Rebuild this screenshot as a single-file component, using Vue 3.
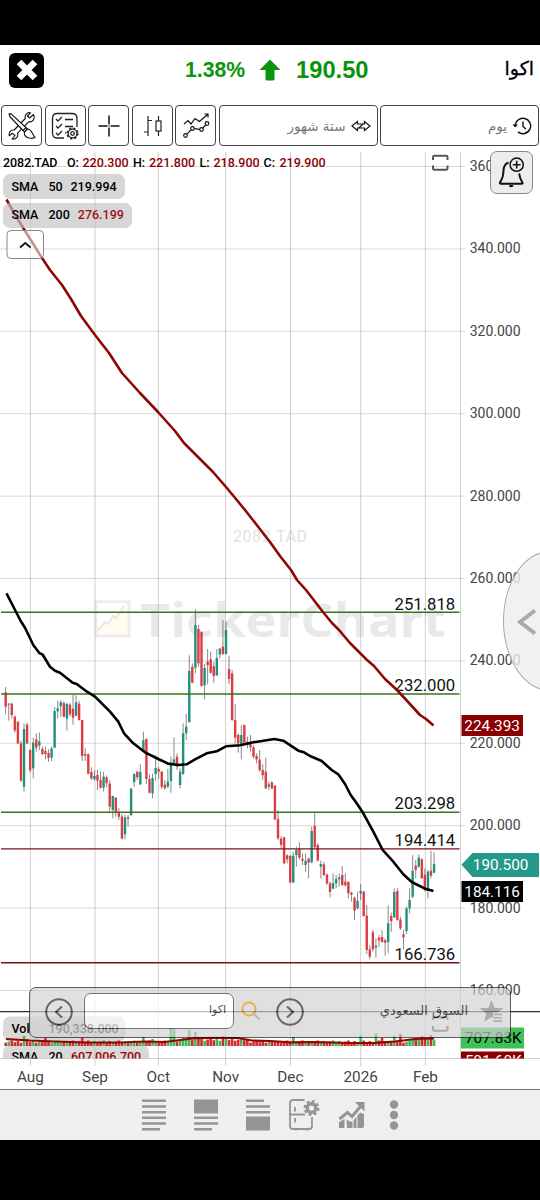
<template>
    <div class="screen">
        <header class="header">
            <button class="close-btn">
                <svg width="24" height="24" viewBox="0 0 24 24">
                    <path d="M4 4L20 20M20 4L4 20" stroke="#fff" stroke-width="6.6" />
                </svg>
            </button>
            <div class="quote">
                <span class="percent">1.38%</span>
                <svg class="arrow" width="22" height="22" viewBox="0 0 22 22">
                    <path d="M11 0.5L21.5 11H15.5V20Q15.5 21.5 14 21.5H8Q6.5 21.5 6.5 20V11H0.5Z" fill="#0b930b" />
                </svg>
                <span class="price">190.50</span>
            </div>
            <div class="symbol">اكوا</div>
        </header>

        <nav class="toolbar">
            <button class="tool">
                <svg width="28" height="28" viewBox="0 0 28 28" fill="#fff" stroke="#111" stroke-width="1.1" stroke-linejoin="round">
                    <path d="M25.5 2.5L21.5 6L19.5 4L22.5 0.8C19 0 16.5 3 17.3 6.5L6.2 18C3 17.5 0.5 20 1.3 23.8L4.5 21.3L7 23.5L4 27C8 27.8 10.5 24.5 9.6 21.2L20.6 9.8C24.5 10.5 27.5 7 25.5 2.5Z" />
                    <path d="M1 2Q2.5 1 4 2.7L19.5 17L16.5 20L2.2 5Z" />
                    <path d="M16.5 20L19.5 17C24 17 24 22.5 27 25.5C21.5 27.5 15.5 25.5 16.5 20Z" />
                    <path d="M15 18.5L18 15.5" />
                </svg>
            </button>
            <button class="tool">
                <svg width="28" height="28" viewBox="0 0 28 28" fill="none" stroke="#222" stroke-width="1.3">
                    <path d="M13 26H6Q1.5 26 1.5 21V6.5Q1.5 1.5 6 1.5H21Q26 1.5 26 6.5V15" />
                    <path d="M5 7l2 2 4-4M5 14l2 2 4-4M5 21l2 2 4-4M14 7.5H22M14 14.5H22M14 21H15" />
                    <circle cx="21.5" cy="21.5" r="4.4" />
                    <circle cx="21.5" cy="21.5" r="5.2" stroke-width="1.8" stroke-dasharray="2.1 2" />
                    <circle cx="21.5" cy="21.5" r="1.8" />
                </svg>
            </button>
            <button class="tool">
                <svg width="22" height="22" viewBox="0 0 22 22" stroke="#111" stroke-width="1.5">
                    <path d="M0.5 11H9.5M12.5 11H21.5M11 0.5V9.5M11 12.5V21.5" />
                    <path d="M10.6 11H11.4" />
                </svg>
            </button>
            <button class="tool">
                <svg width="22" height="22" viewBox="0 0 22 22" fill="none" stroke="#222" stroke-width="1.2">
                    <path d="M7 1V21M3 17H7M7 5.5H11M17.5 1V6M17.5 16V21" />
                    <rect x="15" y="6" width="5" height="10" />
                </svg>
            </button>
            <button class="tool">
                <svg width="28" height="28" viewBox="0 0 28 28" fill="none" stroke="#111" stroke-width="1.2">
                    <path d="M2 12L6 8.5L9 12L13 6.5L17.5 9.5L25.5 2.5M22.5 2H26V5.5" />
                    <circle cx="3.5" cy="23.5" r="1.8" />
                    <circle cx="10.5" cy="16.5" r="1.8" />
                    <circle cx="19.5" cy="17.5" r="1.8" />
                    <circle cx="25" cy="11.5" r="1.8" />
                    <path d="M5 22.2L9 17.8M12.5 16.7L17.5 17.3M20.8 16L23.6 13" />
                </svg>
            </button>
            <div class="select range">
                <span>ستة شهور</span>
                <svg width="20" height="12" viewBox="0 0 20 12" fill="#fff" stroke="#111" stroke-width="1.2">
                    <path d="M1 6L6.5 1.5V4H13.5V1.5L19 6L13.5 10.5V8H6.5V10.5Z" />
                    <path d="M8 8L12 4" />
                </svg>
            </div>
            <div class="select interval">
                <span>يوم</span>
                <svg width="20" height="18" viewBox="0 0 20 18" fill="none" stroke="#111" stroke-width="1.4">
                    <path d="M3.2 9A7.7 7.7 0 1 1 6 14.9M11 4.5V9.5L13.8 12" />
                    <path d="M0.5 7.5H6L3.2 10.5Z" fill="#111" stroke="none" />
                </svg>
            </div>
        </nav>

        <main class="chart">
            <svg class="plot" width="540" height="939" viewBox="0 150 540 939">
                <defs>
                    <clipPath id="volumeClip">
                        <rect x="0" y="1012" width="540" height="46.5" />
                    </clipPath>
                </defs>

                <!-- watermark -->
                <text class="wm-code" x="233" y="542" textLength="74">2082.TAD</text>
                <g opacity="0.5">
                    <rect x="96" y="602" width="33" height="34" fill="#fffbe0" stroke="#dcdcdc" stroke-width="3" />
                    <path d="M97.5 628L101 629L105 622L108 624L113 616L116 618L124 606V603H97.5Z" fill="#fff" />
                    <path d="M98 630L101 627L105 622L108 624L113 616L116 618L124 606" fill="none" stroke="#d2d2d2" stroke-width="2" />
                </g>
                <text class="wm-brand" x="140" y="637" textLength="306" lengthAdjust="spacingAndGlyphs">TickerChart</text>

                <!-- grid -->
                <g stroke="#a8a8a8" stroke-opacity="0.55" stroke-width="1">
                    <line v-for="m in months" :key="m.label" :x1="m.x" y1="152" :x2="m.x" y2="1066" />
                    <line x1="460.5" y1="152" x2="460.5" y2="1058" />
                    <line v-for="p in ticks" :key="p" x1="0" :y1="priceY(p)" x2="465" :y2="priceY(p)" stroke-opacity="0.42" />
                    <line x1="0" y1="1058.5" x2="540" y2="1058.5" />
                </g>
                <text v-for="p in ticks" :key="p" class="axis" x="469.7" :y="priceY(p) + 4.5">{{ p }}.000</text>
                <text v-for="m in months" :key="m.label" class="month" :x="m.x" y="1081.5">{{ m.label }}</text>

                <!-- candles -->
                <g v-for="(c, i) in candles" :key="i">
                    <line :x1="c.x" :x2="c.x" :y1="c.high" :y2="c.low" stroke="#555" stroke-width="0.7" />
                    <rect :x="c.x - 1.2" :y="c.top" width="2.4" :height="c.height" :fill="c.color" />
                </g>

                <!-- levels -->
                <g v-for="l in levels" :key="l.label">
                    <line x1="1" :y1="l.y" x2="459.5" :y2="l.y" :stroke="l.color" stroke-width="1.4" />
                    <text class="level" x="394.5" :y="l.y - 2.8">{{ l.label }}</text>
                </g>

                <polyline :points="sma50" fill="none" stroke="#000" stroke-width="2.6" stroke-linejoin="round" />
                <polyline :points="sma200" fill="none" stroke="#8c0808" stroke-width="2.6" stroke-linejoin="round" />

                <!-- volume pane -->
                <line x1="0" y1="1011.7" x2="540" y2="1011.7" stroke="#333" stroke-width="1.2" />
                <g clip-path="url(#volumeClip)">
                    <rect x="3" y="1016.5" width="122.5" height="25" rx="7" fill="#c4c4c4" fill-opacity="0.65" />
                    <text class="legend" x="11.5" y="1033">Vol</text>
                    <text class="legend" x="48.5" y="1033" fill="#222">190,338.000</text>
                    <rect x="3" y="1045" width="146" height="25" rx="7" fill="#c4c4c4" fill-opacity="0.65" />
                    <text class="legend" x="11.5" y="1060.5">SMA</text>
                    <text class="legend" x="48.5" y="1060.5">20</text>
                    <text class="legend" x="71" y="1060.5" fill="#900">607,006.700</text>
                    <rect x="461" y="1027.5" width="63" height="21" fill="#3fc157" />
                    <text class="tag" x="465" y="1043">707.83K</text>
                    <rect x="461" y="1051.5" width="63" height="21" fill="#8b0000" />
                    <text class="tag" x="465" y="1065.5" fill="#fff">591.60K</text>
                </g>
                <rect v-for="(v, i) in volumes" :key="i" :x="v.x - 1.3" :y="1046 - v.h" width="2.6" :height="v.h" :fill="v.color" />
                <polyline :points="volumeAverage" fill="none" stroke="#8c0808" stroke-width="2.2" />

                <!-- price tags -->
                <rect x="461.5" y="715" width="61.5" height="21" fill="#8b0000" />
                <text class="tag" x="464.3" y="730.5" fill="#fff">224.393</text>
                <path d="M461.5 864.8L472.5 853H539V877H472.5Z" fill="#24998a" />
                <text class="tag" x="472.8" y="870.3" fill="#fff">190.500</text>
                <rect x="461.5" y="881" width="61.5" height="21" fill="#000" />
                <text class="tag" x="464.3" y="896.5" fill="#fff">184.116</text>

                <!-- legend -->
                <g class="legend">
                    <text x="3" y="166.5" textLength="54.5">2082.TAD</text>
                    <text x="67" y="166.5">O:</text>
                    <text x="82.5" y="166.5" fill="#8b0000">220.300</text>
                    <text x="133" y="166.5">H:</text>
                    <text x="149" y="166.5" fill="#8b0000">221.800</text>
                    <text x="199.5" y="166.5">L:</text>
                    <text x="213.5" y="166.5" fill="#8b0000">218.900</text>
                    <text x="263.5" y="166.5">C:</text>
                    <text x="279.5" y="166.5" fill="#8b0000">219.900</text>
                    <rect x="3" y="174" width="122" height="25" rx="7" fill="#c4c4c4" fill-opacity="0.68" />
                    <text x="11.5" y="190.5">SMA</text>
                    <text x="48.5" y="190.5">50</text>
                    <text x="70.5" y="190.5">219.994</text>
                    <rect x="3" y="203" width="129" height="25" rx="7" fill="#c4c4c4" fill-opacity="0.68" />
                    <text x="11.5" y="219">SMA</text>
                    <text x="48.5" y="219">200</text>
                    <text x="77.8" y="219" fill="#a50d16">276.199</text>
                </g>
                <rect x="7" y="230.5" width="36.5" height="28" rx="4" fill="#fff" fill-opacity="0.55" stroke="#888" />
                <path d="M20 247.5L25.3 243L30.6 247.5" fill="none" stroke="#111" stroke-width="1.8" />
                <g fill="none" stroke="#555" stroke-width="2">
                    <path d="M433 160V157Q433 155.7 434.5 155.7H446Q447.5 155.7 447.5 157V160M433 165.5V168.5Q433 169.8 434.5 169.8H446Q447.5 169.8 447.5 168.5V165.5" />
                    <path d="M433 1020V1018Q433 1017.2 434.5 1017.2H446Q447.5 1017.2 447.5 1018V1020M433 1026V1029Q433 1030.8 434.5 1030.8H446Q447.5 1030.8 447.5 1029V1026" />
                </g>
            </svg>

            <button class="alert-btn">
                <svg width="30" height="34" viewBox="0 0 30 34" fill="none" stroke="#111" stroke-width="2">
                    <path d="M11.5 6.5C7 8 6.5 12 6.3 17C6.1 22 4.5 23.5 3 26.5Q2.6 27.8 4 27.8H24.5Q26 27.8 25.4 26.5C23.5 23.5 22.5 21.5 22.2 17.5" />
                    <path d="M12.5 29.5Q14.2 31 16 29.5" fill="#111" />
                    <circle cx="19.7" cy="8.7" r="6.6" stroke-width="1.5" />
                    <path d="M15.8 8.7H23.6M19.7 4.8V12.6" stroke-width="1.6" />
                </svg>
            </button>

            <div class="drawer">
                <svg width="20" height="28" viewBox="0 0 20 28" fill="none" stroke="#aaa" stroke-width="4">
                    <path d="M18 2.5L3 14L18 25.5" />
                </svg>
            </div>

            <div class="market-bar">
                <svg width="28" height="28" viewBox="0 0 28 28" fill="none" stroke="#222" stroke-width="2">
                    <circle cx="14" cy="14" r="12.8" />
                    <path d="M17 8.5L11 14L17 19.5" />
                </svg>
                <div class="search-box">اكوا</div>
                <svg class="search-icon" width="20" height="20" viewBox="0 0 20 20" fill="none">
                    <path d="M13 13L18.5 18.5" stroke="#999" stroke-width="2.2" />
                    <circle cx="8" cy="8" r="6.6" stroke="#e08c00" stroke-width="2" />
                </svg>
                <svg class="next" width="28" height="28" viewBox="0 0 28 28" fill="none" stroke="#222" stroke-width="2">
                    <circle cx="14" cy="14" r="12.8" />
                    <path d="M11 8.5L17 14L11 19.5" />
                </svg>
                <span class="market">السوق السعودي</span>
                <svg class="star" width="26" height="26" viewBox="0 0 26 26">
                    <path d="M12.5 1L15.6 9H24.5L17.8 14.5L19.5 22L12.5 18L5 23L7.4 14.5L0.5 9H9.3Z" fill="#858585" />
                    <path d="M14 13.5H24V26H14Z" fill="#d2d2d2" />
                    <path d="M14.5 15.5H23M14.5 18.8H23M14.5 22.1H23" stroke="#858585" stroke-width="1.6" />
                </svg>
            </div>
        </main>

        <footer class="bottom-bar">
            <svg class="text-rows" width="24" height="32" viewBox="0 0 24 32" fill="#959595">
                <path d="M0 .5H24V3H0ZM0 6.2H24V8.7H0ZM0 11.9H24V14.4H0ZM0 17.6H24V20.1H0ZM0 23.3H24V25.8H0ZM0 29H18V31.5H0Z" />
            </svg>
            <svg class="block-top" width="24" height="32" viewBox="0 0 24 32" fill="#959595">
                <path d="M0 .5H24V14.5H0ZM0 17.6H24V20.1H0ZM0 23.3H24V25.8H0ZM0 29H18V31.5H0Z" />
            </svg>
            <svg class="block-bottom" width="24" height="32" viewBox="0 0 24 32" fill="#959595">
                <path d="M0 .5H18V3H0ZM0 6.2H24V8.7H0ZM0 11.9H24V14.4H0ZM0 17.6H24V31.5H0Z" />
            </svg>
            <svg class="settings" width="31" height="32" viewBox="0 0 31 32" fill="none" stroke="#959595" stroke-width="1.8">
                <path d="M15.5 1H4Q1 1 1 4V27Q1 30 4 30H20Q23 30 23 27V18M1 15.5H16M6 8V12.5M6 19V23.5" />
                <path d="M7 30V31.5M18 30V31.5" />
                <circle cx="22.5" cy="9" r="4.3" stroke-width="3.4" />
                <circle cx="22.5" cy="9" r="6.8" stroke-width="2.4" stroke-dasharray="3 2.34" />
            </svg>
            <svg class="growth" width="28" height="28" viewBox="0 0 28 28" fill="#959595">
                <path d="M1 21L6.5 18V27H1ZM8.5 18.5L11 20L14.5 21V27H9ZM15.5 19.5L18.5 15.5V27H15.5ZM19.5 14L22.5 11.5L26 13V25Q26 27 24 27H19.5Z" />
                <path d="M1.5 18L9.5 11.5L14 15.5L22.5 5.5" fill="none" stroke="#959595" stroke-width="3" />
                <path d="M17 1H26.5V10.5Z" />
            </svg>
            <svg class="more" width="10" height="30" viewBox="0 0 10 30" fill="#959595">
                <circle cx="5" cy="4.5" r="4.2" />
                <circle cx="5" cy="15" r="4.2" />
                <circle cx="5" cy="25.5" r="4.2" />
            </svg>
        </footer>
    </div>
</template>

<script setup>
const ticks = [360, 340, 320, 300, 280, 260, 240, 220, 200, 180, 160];
const priceY = (price) => 990.5 - (price - 160) * 4.12;

const months = [
    { label: 'Aug', x: 30.4 },
    { label: 'Sep', x: 95 },
    { label: 'Oct', x: 158.3 },
    { label: 'Nov', x: 225.6 },
    { label: 'Dec', x: 290.4 },
    { label: '2026', x: 360.7 },
    { label: 'Feb', x: 425.4 }
];

const levels = [
    { label: '251.818', y: 612.3, color: '#37741a' },
    { label: '232.000', y: 694, color: '#37741a' },
    { label: '203.298', y: 812.2, color: '#37741a' },
    { label: '194.414', y: 848.9, color: '#7b1018' },
    { label: '166.736', y: 962.8, color: '#7b1018' }
];

// up/down, body top, body bottom, wick top, wick bottom (in thirds of a pixel)
const firstHalf = `d367-410-351-433 u401-404-399-452 d401-435-399-445 d440-481-437-488 d456-520-452-522 d520-632-512-635
u477-650-460-665 d464-520-458-522 d540-601-538-607 u518-595-503-625 d508-533-490-545 u514-527-487-540 d537-552-530-556
d543-552-530-568 d549-564-538-575 u535-563-530-573 u423-533-411-535 u415-424-392-446 u396-409-391-440 d399-440-394-442
u402-446-398-482 d404-433-400-440 d416-443-374-464 u397-437-376-438 d401-450-392-452 d450-558-449-573 d552-557-535-573
d553-611-550-614 d606-625-592-630 u618-628-600-632 d615-632-600-660 d630-653-605-656 u620-653-605-665 d622-640-616-652
d641-710-630-730 u678-720-677-745 d683-727-681-740 d727-740-715-750 d740-806-732-808 u743-793-735-808 d742-747-735-770
u656-735-654-738 u612-636-610-650 d605-622-603-630 u606-643-583-645 u511-544-485-546 d507-627-505-643 d627-668-613-671
u624-670-611-685 u594-612-555-632 d597-605-590-627 d605-650-603-657 d644-654-630-660 u634-650-597-655 u577-633-560-668
u568-580-502-585 d560-590-550-600 u605-645-595-655 u490-612-460-615 u470-490-432-510 u303-456-256-458 d290-338-280-340
u165-293-118-310 d177-280-165-290 d186-348-184-350 u294-346-283-388 d275-285-237-343 d268-308-245-312 d289-318-275-338
u264-316-237-318 u236-254-234-265 d230-252-150-254 u180-252-155-254 d297-327-257-343`;

const secondHalf = `d250-390-240-393 d390-443-342-460 d435-460-430-488 u435-465-405-508 d405-458-404-460 d455-465-440-475
d458-472-435-485 d472-500-465-505 d498-508-490-520 d509-541-480-545 d540-556-523-570 d545-595-503-597 u583-590-575-600
d577-595-574-598 d587-688-585-690 d687-745-660-750 d746-765-738-775 d742-820-740-823 d796-808-793-820 d798-877-795-880
u797-877-785-880 u780-795-770-830 d777-803-757-808 d806-812-790-825 u812-825-790-845 d806-818-803-865 u723-817-710-820
d707-772-668-775 d765-812-760-814 u822-830-812-865 d823-855-815-858 d854-880-850-885 d880-906-875-922 u879-896-850-898
u867-880-855-895 u862-868-850-890 d855-885-828-888 d875-886-850-890 d876-910-874-925 d908-914-905-935 d923-962-920-990
u932-955-905-957 u903-910-882-930 d905-978-903-980 d977-1080-945-1092 d1078-1100-1065-1108 d1027-1078-1020-1085
u1067-1073-1045-1103 d1043-1051-1035-1070 d1041-1056-1020-1058 d1051-1058-1045-1097 u1000-1056-947-1090 d978-994-968-1025
u906-982-895-984 d903-990-893-992 d989-1015-980-1020 d1033-1042-1020-1078 u955-1023-950-1032 u930-955-895-970
u842-920-795-925 d827-840-810-865 u803-830-793-833 d808-865-805-867 d854-900-835-905 u845-902-840-925 d842-857-782-865
u822-848-787-850`;

const parse = (text, base) => text.split(/\s+/).map((item) => {
    const [top, bottom, high, low] = item.slice(1).split('-').map((v) => base + Number(v) / 3);
    return { top, high, low, height: bottom - top, up: item[0] === 'u' };
});

const candles = [...parse(firstHalf, 570), ...parse(secondHalf, 590)].map((c, i) => ({
    ...c,
    x: 5.67 + i * 3.06,
    color: c.up ? '#23907e' : '#dc3c42'
}));

const spikes = { 6: 10, 7: 7, 13: 8, 25: 8, 45: 9, 48: 7, 54: 18, 55: 17, 58: 8, 60: 16, 62: 14, 63: 9, 71: 10, 94: 9, 116: 11, 121: 13, 123: 8, 127: 10, 129: 12, 136: 10, 139: 11 };
const volumes = candles.map((c, i) => ({
    x: c.x,
    h: spikes[i] || 3.3 + ((i * 7) % 5) * 0.55 + (i > 58 && i < 80 ? 2 : 0) + (i > 132 ? 3 : 0),
    color: c.up ? '#3fb955' : '#d52b2f'
}));

const sma200 = '6.5,199.5 14,213 22,226 32,242 42,258 50,270 62,285 71,299 81,316 95,335 109,353 122,373 140,393 158,412 175,431 184,443 198,457 213,472 226,487 236,499 245,510 256,524 270,542 280,556 291,570 297,580 306,590 323,612 332,623 339,630 350,643 358,651 367,660 374,666 385,679 397,690 409,703 420,715 426,719 433.5,725.5';

const sma50 = '6.5,593.3 13,606 20.7,621 25,627.7 33.3,645 39.3,653 42.7,654.7 50,666.7 55,670.7 60,672.7 72.7,682.7 76.7,684 85,690.3 95,696.7 110,711.7 118.3,721.7 124,733.3 133.3,743.3 145,752.3 158.3,759 168.3,763.7 178.3,765 186.7,764.3 195,759.3 206.7,753.3 216.7,751.3 226,746.3 240,745.3 253.3,742.3 266.7,740.3 274.3,739 283.3,740.7 298.3,750.7 304,752.3 310,756 321.7,761 331.7,770 338.3,774.3 345,784 350.7,795 356.7,803.3 363.3,813.3 373.3,831.7 382.7,850 393.3,861.7 403.3,874.3 411.7,882 425,888.7 433.5,891';

const volumeAverage = '6,1039 30,1040.5 55,1041.5 85,1042.5 120,1042.5 145,1041.5 165,1042 180,1040 195,1038.2 215,1037.8 238,1038 252,1040.5 270,1041 290,1042.3 315,1042 350,1043 375,1042.8 395,1041.5 415,1039 434,1038.5';
</script>

<style scoped>
.screen {
    width: 540px;
    height: 1200px;
    box-sizing: border-box;
    padding: 45px 0 60px;
    background: #000;
    display: flex;
    flex-direction: column;
    font-family: Roboto, "DejaVu Sans", sans-serif;
}

button {
    padding: 0;
    display: flex;
    align-items: center;
    justify-content: center;
}

.header {
    height: 59px;
    padding: 0 6px 9px 9px;
    box-sizing: border-box;
    background: #fff;
    display: grid;
    grid-template-columns: 176px auto 1fr;
    align-items: center;
}

.close-btn {
    width: 35px;
    height: 35px;
    border: 0;
    border-radius: 6px;
    background: #000;
}

.quote {
    display: flex;
    align-items: center;
    color: #0b930b;
    font-family: "Liberation Sans", Arial, sans-serif;
    font-weight: bold;
}

.percent {
    font-size: 21.2px;
}

.arrow {
    margin: 0 15px 0 14px;
}

.price {
    font-size: 23.7px;
}

.symbol {
    margin-top: -4px;
    direction: rtl;
    font: 19px "DejaVu Sans", sans-serif;
    -webkit-text-stroke: 0.3px #000;
}

.toolbar {
    height: 46px;
    padding: 1px 1px 4px;
    box-sizing: border-box;
    background: #fff;
    display: flex;
    gap: 2.5px;
}

.tool,
.select {
    box-sizing: border-box;
    height: 41px;
    border: 1px solid #444;
    border-radius: 4px;
    background: #fff;
}

.tool {
    width: 41px;
    flex: none;
}

.select {
    display: flex;
    align-items: center;
    justify-content: flex-end;
    gap: 5px;
    padding-right: 6px;
    color: #777;
    direction: ltr;
    font: 13.5px "DejaVu Sans", sans-serif;
}

.range {
    width: 159px;
}

.interval {
    flex: 1;
}

.chart {
    position: relative;
    height: 939px;
    background: #fff;
}

.plot {
    display: block;
}

.plot text {
    font-family: Roboto, sans-serif;
}

.plot .axis {
    font-size: 14px;
    fill: #444;
}

.plot .month {
    font-size: 15.3px;
    fill: #444;
    text-anchor: middle;
}

.plot .level {
    font-size: 16.7px;
    fill: #111;
}

.plot .tag {
    font-size: 15.3px;
}

.plot .legend {
    font-size: 12.5px;
    font-weight: 500;
}

.plot .wm-code {
    font-size: 16px;
    fill: #e2e2e2;
}

.plot .wm-brand {
    font: bold 46px "Open Sans", sans-serif;
    fill: #e9e9e9;
}

.alert-btn {
    position: absolute;
    top: 1px;
    left: 490px;
    width: 43px;
    height: 43px;
    border: 1px solid #888;
    border-radius: 7px;
    background: #ededed;
}

.drawer {
    position: absolute;
    top: 401px;
    left: 503px;
    width: 37px;
    height: 140px;
    box-sizing: border-box;
    padding: 2px 2px 0 14px;
    overflow: hidden;
    display: flex;
    align-items: center;
}

.drawer::before {
    content: "";
    position: absolute;
    left: 0;
    top: 0;
    width: 92px;
    height: 138px;
    border: 1px solid #aaa;
    border-radius: 50%;
    background: rgba(237, 237, 237, 0.8);
}

.drawer svg {
    position: relative;
}

.market-bar {
    position: absolute;
    left: 29px;
    top: 836.5px;
    width: 482px;
    height: 51px;
    box-sizing: border-box;
    padding: 0 5px 0 15px;
    border: 1.5px solid #111;
    border-radius: 7px;
    background: #d2d2d2;
    opacity: 0.68;
    display: flex;
    align-items: center;
}

.search-box {
    width: 150px;
    height: 36px;
    box-sizing: border-box;
    margin: -3px 0 0 11px;
    padding-right: 7px;
    border: 1px solid #333;
    border-radius: 7px;
    background: #fff;
    direction: rtl;
    font: 11px/31px "DejaVu Sans", sans-serif;
}

.search-icon {
    margin: -3px 0 0 7px;
}

.next {
    margin-left: 15px;
}

.market {
    margin: -3px 0 0 auto;
    font: 13px "DejaVu Sans", sans-serif;
}

.star {
    margin-left: 11px;
}

.bottom-bar {
    height: 51px;
    box-sizing: border-box;
    padding-left: 142px;
    border-top: 1px solid #777;
    background: #efefef;
    display: flex;
    align-items: center;
}

.block-top,
.block-bottom {
    margin-left: 28px;
}

.settings {
    margin-left: 19px;
}

.growth {
    margin-left: 18px;
}

.more {
    margin-left: 23px;
}
</style>

<style>
body {
    margin: 0;
    background: #000;
}
</style>
